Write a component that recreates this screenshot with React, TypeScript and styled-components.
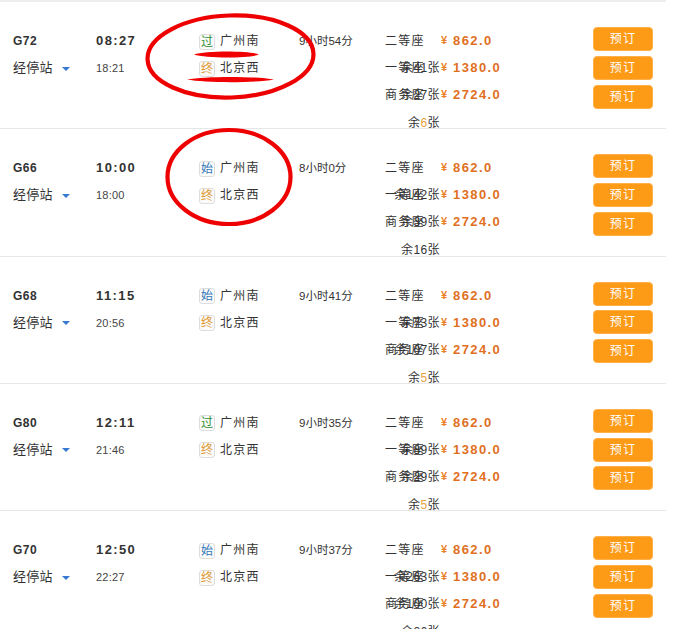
import styled, { createGlobalStyle } from 'styled-components';

const GlobalStyle = createGlobalStyle`
  html, body {
    margin: 0;
    padding: 0;
    background: #fff;
    overflow: hidden;
  }
  body {
    font-family: "Liberation Sans", "Noto Sans CJK SC", sans-serif;
    color: #333;
  }
`

const Page = styled.div`
  position: relative;
  width: 675px;
  height: 629px;
  overflow: hidden;
`
const List = styled.ul`
  width: 666px;
  margin: 0;
  padding: 0;
  list-style: none;
  border-top: 2px solid #eee;
`
const Row = styled.li`
  box-sizing: border-box;
  display: flex;
  height: 127.25px;
  padding: 25px 13px 0 13px;
  border-bottom: 1px solid #e6e6e6;
`
const Line = styled.div`
  height: 27px;
  line-height: 27px;
  white-space: nowrap;
`
// CJKの文字は少し上に寄るので行の高さで下げる
const LowLine = styled(Line)`
  line-height: 29px;
`
const TrainCol = styled.div`
  width: 83px;
  flex: none;
`
const TrainNo = styled(LowLine)`
  font-size: 12px;
  font-weight: bold;
  letter-spacing: 0.5px;
  color: #333;
`
const Stops = styled(Line)`
  display: flex;
  align-items: center;
  font-size: 13px;
  letter-spacing: 0.3px;
`
const Arrow = styled.i`
  width: 0;
  height: 0;
  margin: 2px 0 0 9px;
  border-style: solid;
  border-width: 4px 4px 0;
  border-color: #3579d0 transparent transparent;
`
const TimeCol = styled.div`
  width: 103px;
  flex: none;
`
const Depart = styled(Line)`
  font-size: 13px;
  font-weight: bold;
  letter-spacing: 1.4px;
`
const Arrive = styled(LowLine)`
  font-size: 11px;
  letter-spacing: 0.2px;
  color: #444;
`
const StationCol = styled.div`
  width: 100px;
  flex: none;
`
const Station = styled(Line)`
  box-sizing: border-box;
  display: flex;
  align-items: center;
  gap: 5px;
  padding-top: 2px;
  font-size: 12px;
  letter-spacing: 1.2px;
`
const Badge = styled.span<{ $color: string }>`
  box-sizing: border-box;
  width: 16px;
  height: 16px;
  border: 1px solid #ddd;
  border-radius: 3px;
  background: #fbfbfb;
  font-size: 12px;
  line-height: 14px;
  letter-spacing: 0;
  text-align: center;
  color: ${({ $color }) => $color};
`
const DurationCol = styled.div`
  width: 86px;
  flex: none;
  font-size: 11.5px;
`
const SeatCol = styled.div`
  width: 208px;
  flex: none;
`
const SeatLine = styled(Line)`
  display: flex;
`
const SeatName = styled.div`
  display: grid;
  width: 55px;
  font-size: 12px;
  line-height: 29px;
  letter-spacing: 1.2px;
  > span {
    grid-area: 1 / 1;
  }
`
const Count = styled.span`
  justify-self: end;
  letter-spacing: 0.4px;
  color: #333;
`
const Digit = styled.em<{ $few: boolean }>`
  font-style: normal;
  color: ${({ $few }) => ($few ? '#e8a23c' : 'inherit')};
`
const Yen = styled.span`
  width: 12px;
  margin-left: 1px;
  font-size: 11px;
  font-weight: bold;
  color: #e8812a;
`
const Price = styled.span`
  font-size: 13px;
  font-weight: bold;
  letter-spacing: 1.4px;
  color: #e0701f;
`
const LeftLine = styled(Line)`
  width: 55px;
  font-size: 12px;
  line-height: 31px;
  letter-spacing: 0.4px;
  text-align: right;
`
const ButtonCol = styled.div`
  display: flex;
  flex-direction: column;
  gap: 4.75px;
  width: 60px;
  flex: none;
`
const BookButton = styled.button`
  width: 60px;
  height: 24px;
  padding: 0 0 3px;
  border: 1px solid #ffb04a;
  border-radius: 4px;
  background: #fd9a16;
  font-family: inherit;
  font-size: 12px;
  letter-spacing: 1.2px;
  color: #fff;
`
const Marks = styled.svg`
  position: absolute;
  left: 0;
  top: 0;
  pointer-events: none;
`

type Train = {
  no: string
  depart: string
  arrive: string
  badge: '过' | '始'
  duration: string
  left: string
  first: string
  business: string
}

const trains: Train[] = [
  { no: 'G72', depart: '08:27', arrive: '18:21', badge: '过', duration: '9小时54分', left: '6', first: '41', business: '27' },
  { no: 'G66', depart: '10:00', arrive: '18:00', badge: '始', duration: '8小时0分', left: '16', first: '142', business: '39' },
  { no: 'G68', depart: '11:15', arrive: '20:56', badge: '始', duration: '9小时41分', left: '5', first: '73', business: '107' },
  { no: 'G80', depart: '12:11', arrive: '21:46', badge: '过', duration: '9小时35分', left: '5', first: '89', business: '29' },
  { no: 'G70', depart: '12:50', arrive: '22:27', badge: '始', duration: '9小时37分', left: '26', first: '263', business: '100' },
]

const badgeColor = { 过: '#2f8f2f', 始: '#2f76b8', 终: '#e09a35' }

const Seat = ({ name, price, count }: { name: string; price: string; count?: string }) => (
  <SeatLine>
    <SeatName>
      <span>{name}</span>
      {count && <Count>余{count}张</Count>}
    </SeatName>
    <Yen>¥</Yen>
    <Price>{price}</Price>
  </SeatLine>
)

const App = () => (
  <Page>
    <GlobalStyle />
    <List>
      {trains.map((t) => (
        <Row key={t.no}>
          <TrainCol>
            <TrainNo>{t.no}</TrainNo>
            <Stops>经停站<Arrow /></Stops>
          </TrainCol>
          <TimeCol>
            <Depart>{t.depart}</Depart>
            <Arrive>{t.arrive}</Arrive>
          </TimeCol>
          <StationCol>
            <Station><Badge $color={badgeColor[t.badge]}>{t.badge}</Badge>广州南</Station>
            <Station><Badge $color={badgeColor['终']}>终</Badge>北京西</Station>
          </StationCol>
          <DurationCol>
            <LowLine>{t.duration}</LowLine>
          </DurationCol>
          <SeatCol>
            <Seat name="二等座" price="862.0" />
            <Seat name="一等座" price="1380.0" count={t.first} />
            <Seat name="商务座" price="2724.0" count={t.business} />
            <LeftLine>余<Digit $few={t.left.length === 1}>{t.left}</Digit>张</LeftLine>
          </SeatCol>
          <ButtonCol>
            <BookButton>预订</BookButton>
            <BookButton>预订</BookButton>
            <BookButton>预订</BookButton>
          </ButtonCol>
        </Row>
      ))}
    </List>
    {/* 手描きの赤い印 */}
    <Marks width="675" height="629" viewBox="0 0 675 629">
      <ellipse cx="230.5" cy="56.5" rx="83" ry="41" fill="none" stroke="#ee0000" strokeWidth="4.2" transform="rotate(-2 230.5 56.5)" />
      <ellipse cx="229" cy="177" rx="61.5" ry="47" fill="none" stroke="#ee0000" strokeWidth="4.2" />
      <path d="M194 54.5 C205 50.5 250 50.5 259 54.5 C250 58.5 205 58.5 194 54.5 Z" fill="#f00000" />
      <path d="M187 79.5 C205 76 255 76 274 79.5 C255 83 205 83 187 79.5 Z" fill="#f00000" />
    </Marks>
  </Page>
);

export default App;
